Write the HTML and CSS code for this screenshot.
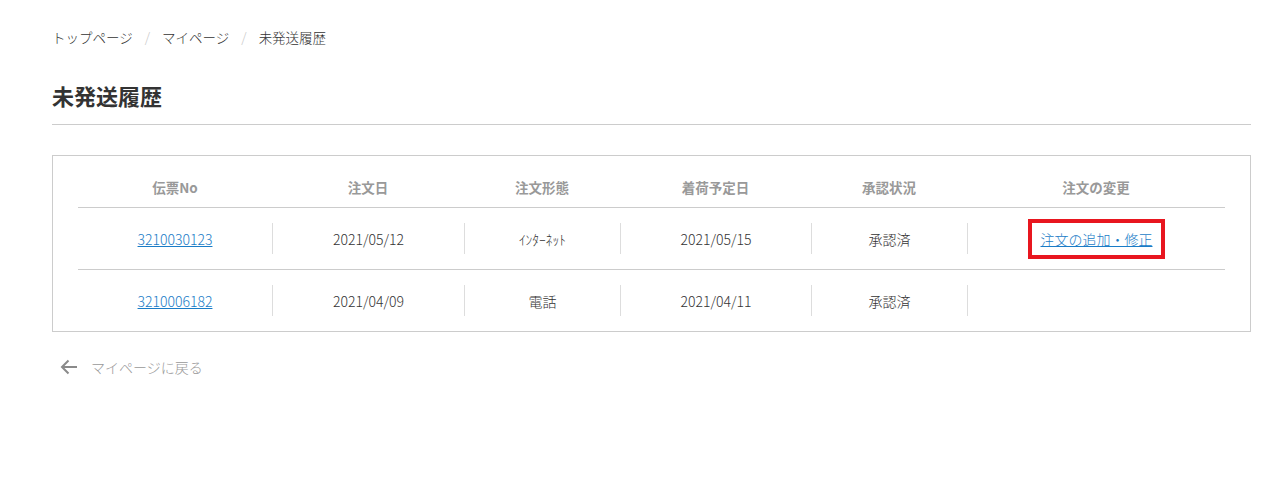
FILE: index.html
```html
<!DOCTYPE html>
<html lang="ja">
<head>
  <meta charset="UTF-8" />
  <meta name="viewport" content="width=device-width, initial-scale=1.0" />
  <title>未発送履歴</title>
  <link rel="stylesheet" href="styles.css">
</head>
<body>
  <div class="page">
    <nav class="breadcrumb">
      <a href="#">トップページ</a>
      <span class="sep">/</span>
      <a href="#">マイページ</a>
      <span class="sep">/</span>
      <span>未発送履歴</span>
    </nav>

    <h1 class="page-title">未発送履歴</h1>

    <div class="history-box">
      <div class="history-table">
        <div class="row head">
          <div class="cell">伝票No</div>
          <div class="cell">注文日</div>
          <div class="cell">注文形態</div>
          <div class="cell">着荷予定日</div>
          <div class="cell">承認状況</div>
          <div class="cell">注文の変更</div>
        </div>
        <div class="row">
          <div class="cell"><a href="#" class="link">3210030123</a></div>
          <div class="cell">2021/05/12</div>
          <div class="cell narrow">ｲﾝﾀｰﾈｯﾄ</div>
          <div class="cell">2021/05/15</div>
          <div class="cell">承認済</div>
          <div class="cell"><span class="marked"><a href="#" class="link">注文の追加・修正</a></span></div>
        </div>
        <div class="row">
          <div class="cell"><a href="#" class="link">3210006182</a></div>
          <div class="cell">2021/04/09</div>
          <div class="cell">電話</div>
          <div class="cell">2021/04/11</div>
          <div class="cell">承認済</div>
          <div class="cell"></div>
        </div>
      </div>
    </div>

    <a href="#" class="back-link">
      <svg width="18" height="16" viewBox="0 0 18 16">
        <path d="M17 8H2M8.5 1.5L2 8l6.5 6.5" fill="none" stroke="#8a8a8a" stroke-width="2"/>
      </svg>
      <span>マイページに戻る</span>
    </a>
  </div>
</body>
</html>
```

FILE: styles.css
```css
* {
  box-sizing: border-box;
}

body {
  margin: 0;
  font-family: "Noto Sans CJK JP", "Noto Sans", sans-serif;
  color: #333;
  background: #fff;
}

a {
  text-decoration: none;
  color: inherit;
}

.page {
  padding: 28px 16px 0 52px;
}

.breadcrumb {
  display: flex;
  align-items: center;
  gap: 12px;
  font-size: 13.5px;
  line-height: 18px;
  font-weight: 300;
  color: #333;
}

.breadcrumb .sep {
  color: #c8c8c8;
}

.page-title {
  margin: 34px 0 0;
  padding-bottom: 14px;
  font-size: 22px;
  line-height: 30px;
  font-weight: bold;
  border-bottom: 1px solid #ccc;
}

.history-box {
  margin-top: 30px;
  border: 1px solid #ccc;
  padding: 0 25px;
}

.row {
  display: grid;
  grid-template-columns: 194px 192px 156px 191px 156px 1fr;
  border-top: 1px solid #ccc;
  padding: 15px 0;
}

.row.head {
  border-top: none;
  padding: 18px 0 8px;
}

.cell {
  height: 31px;
  display: flex;
  align-items: center;
  justify-content: center;
  font-size: 14px;
  font-weight: 300;
  color: #333;
}

.row .cell + .cell {
  border-left: 1px solid #ddd;
}

.row.head .cell {
  height: 25px;
  font-size: 13.5px;
  font-weight: bold;
  color: #999;
  border-left: none;
}

.cell.narrow {
  font-size: 13.5px;
}

.link {
  color: #1a7cc7;
  text-decoration: underline;
}

.marked {
  display: inline-block;
  line-height: 18px;
  padding: 7px 8.5px;
  outline: 4px solid #e8161f;
  outline-offset: -4px;
  border: 4px solid transparent;
}

.back-link {
  display: inline-flex;
  align-items: center;
  gap: 13px;
  margin: 25px 0 0 8px;
  font-size: 14px;
  font-weight: 300;
  color: #999;
}
```
